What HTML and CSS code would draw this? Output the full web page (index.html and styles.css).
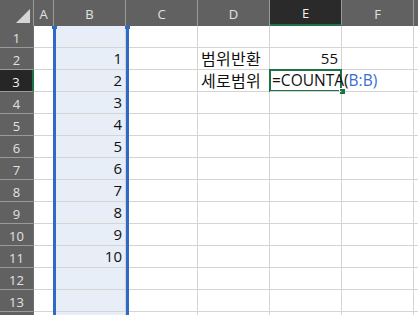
FILE: index.html
```html
<!DOCTYPE html>
<html lang="ko">
<head>
<meta charset="utf-8">
<link rel="stylesheet" href="styles.css">
</head>
<body>
<div class="sheet">
  <div class="grid">
    <div class="hd corner"><span class="tri"></span></div>
    <div class="hd col">A</div>
    <div class="hd col">B</div>
    <div class="hd col">C</div>
    <div class="hd col">D</div>
    <div class="hd col sel-col">E</div>
    <div class="hd col">F</div>
    <div class="hd col last"></div>

    <div class="hd row">1</div><div class="c"></div><div class="c b"></div><div class="c"></div><div class="c"></div><div class="c"></div><div class="c"></div><div class="c"></div>
    <div class="hd row">2</div><div class="c"></div><div class="c b num">1</div><div class="c"></div><div class="c ko">범위반환</div><div class="c num">55</div><div class="c"></div><div class="c"></div>
    <div class="hd row sel-row">3</div><div class="c"></div><div class="c b num">2</div><div class="c"></div><div class="c ko">세로범위</div><div class="c active"><span class="formula">=COUNTA(<span class="ref">B:B)</span></span><span class="caret"></span></div><div class="c"></div><div class="c"></div>
    <div class="hd row">4</div><div class="c"></div><div class="c b num">3</div><div class="c"></div><div class="c"></div><div class="c"></div><div class="c"></div><div class="c"></div>
    <div class="hd row">5</div><div class="c"></div><div class="c b num">4</div><div class="c"></div><div class="c"></div><div class="c"></div><div class="c"></div><div class="c"></div>
    <div class="hd row">6</div><div class="c"></div><div class="c b num">5</div><div class="c"></div><div class="c"></div><div class="c"></div><div class="c"></div><div class="c"></div>
    <div class="hd row">7</div><div class="c"></div><div class="c b num">6</div><div class="c"></div><div class="c"></div><div class="c"></div><div class="c"></div><div class="c"></div>
    <div class="hd row">8</div><div class="c"></div><div class="c b num">7</div><div class="c"></div><div class="c"></div><div class="c"></div><div class="c"></div><div class="c"></div>
    <div class="hd row">9</div><div class="c"></div><div class="c b num">8</div><div class="c"></div><div class="c"></div><div class="c"></div><div class="c"></div><div class="c"></div>
    <div class="hd row">10</div><div class="c"></div><div class="c b num">9</div><div class="c"></div><div class="c"></div><div class="c"></div><div class="c"></div><div class="c"></div>
    <div class="hd row">11</div><div class="c"></div><div class="c b num">10</div><div class="c"></div><div class="c"></div><div class="c"></div><div class="c"></div><div class="c"></div>
    <div class="hd row">12</div><div class="c"></div><div class="c b"></div><div class="c"></div><div class="c"></div><div class="c"></div><div class="c"></div><div class="c"></div>
    <div class="hd row">13</div><div class="c"></div><div class="c b"></div><div class="c"></div><div class="c"></div><div class="c"></div><div class="c"></div><div class="c"></div>
    <div class="hd row"></div><div class="c"></div><div class="c b"></div><div class="c"></div><div class="c"></div><div class="c"></div><div class="c"></div><div class="c"></div>
  </div>
  <div class="colsel"><span class="h hl"></span><span class="h hr"></span></div>
  <div class="cursor"><span class="fill"></span></div>
</div>
</body>
</html>
```
FILE: styles.css
```css
html, body {
  margin: 0;
  padding: 0;
  background: #ffffff;
}
.sheet {
  position: relative;
  width: 418px;
  height: 315px;
  overflow: hidden;
}
.grid {
  display: grid;
  grid-template-columns: 34px 20px 72px 72px 72px 72px 72px 40px;
  grid-template-rows: 26px repeat(14, 22px);
  font-family: "Noto Sans CJK KR", "Open Sans", sans-serif;
}
.hd {
  background: #616161;
  color: #e2e2e2;
  font-family: "Open Sans", "Noto Sans", sans-serif;
  font-size: 13px;
  display: flex;
  align-items: center;
  justify-content: center;
  box-sizing: border-box;
}
.hd.col {
  border-right: 1px solid #9a9a9a;
  padding-top: 1px;
}
.hd.col.last { border-right: none; }
.hd.corner {
  border-right: 1px solid #9a9a9a;
  position: relative;
}
.tri {
  position: absolute;
  right: 3px;
  bottom: 3px;
  width: 0;
  height: 0;
  border-left: 14px solid transparent;
  border-bottom: 14px solid #d6d6d6;
}
.hd.row {
  border-bottom: 1px solid #9a9a9a;
  border-right: 1px solid #6e6e6e;
  justify-content: center;
  padding-top: 2px;
  font-size: 13px;
}
.hd.sel-col {
  background: #2a2a2a;
  color: #f2f2f2;
  border-bottom: 2px solid #1e7145;
}
.hd.sel-row {
  background: #262626;
  color: #f2f2f2;
  border-right: 2px solid #1e7145;
}
.c {
  box-sizing: border-box;
  border-right: 1px solid #d4d4d4;
  border-bottom: 1px solid #d4d4d4;
  font-size: 15px;
  color: #111111;
  line-height: 21px;
  white-space: nowrap;
  display: flex;
  align-items: flex-end;
  min-width: 0;
}
.c.b { background: #e7eef8; }
.num {
  justify-content: flex-end;
  padding-right: 3px;
  font-family: "Open Sans", "Noto Sans", sans-serif;
}
.ko {
  padding-left: 3px;
  font-size: 16px;
  letter-spacing: 0.3px;
}
.c.active {
  overflow: visible;
  position: relative;
  z-index: 2;
  border-right-color: transparent;
}
.formula {
  font-family: "Open Sans", "Noto Sans", sans-serif;
  font-size: 15.5px;
  padding-left: 2px;
  color: #111111;
}
.ref { color: #3b6fcf; }
.caret {
  display: inline-block;
  width: 1px;
  height: 18px;
  background: #111111;
  margin-left: 1px;
  margin-bottom: 2px;
}
.colsel {
  position: absolute;
  left: 53px;
  top: 26px;
  width: 70px;
  height: 300px;
  border-left: 3px solid #2f6ac4;
  border-right: 3px solid #2f6ac4;
  box-sizing: content-box;
}
.h {
  position: absolute;
  top: 0;
  width: 5px;
  height: 3px;
  background: #2f6ac4;
}
.hl { left: -4px; }
.hr { right: -4px; }
.cursor {
  position: absolute;
  left: 269px;
  top: 69px;
  width: 73px;
  height: 23px;
  border: 2px solid #1e7145;
  box-sizing: border-box;
  pointer-events: none;
}
.fill {
  position: absolute;
  right: -5px;
  bottom: -4px;
  width: 5px;
  height: 5px;
  background: #1e7145;
  border-left: 1px solid #ffffff;
  border-top: 1px solid #ffffff;
}
```
